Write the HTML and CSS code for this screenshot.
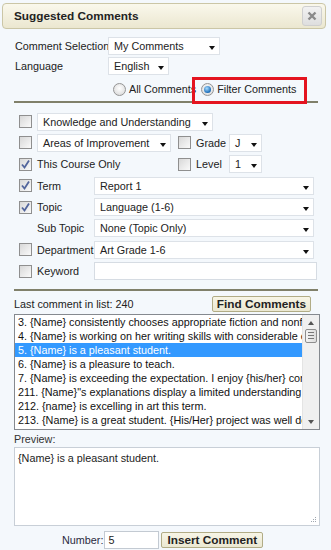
FILE: index.html
```html
<!DOCTYPE html>
<html lang="en">
<head>
  <meta charset="UTF-8" />
  <title>Suggested Comments</title>
  <link rel="stylesheet" href="styles.css">
</head>
<body>
  <div class="dialog">
    <div class="titlebar">
      <span class="title">Suggested Comments</span>
      <span class="close">
        <svg width="10" height="10" viewBox="0 0 10 10"><path d="M1.5 1.5 L8.5 8.5 M8.5 1.5 L1.5 8.5" stroke="#8a8a8a" stroke-width="2.4"/></svg>
      </span>
    </div>

    <div class="content">
      <div class="row">
        <span class="label">Comment Selection</span>
        <div class="select w-my">My Comments</div>
      </div>
      <div class="row">
        <span class="label">Language</span>
        <div class="select w-lang">English</div>
      </div>
      <div class="radio-row">
        <span class="radio"></span><span class="radio-text">All Comments</span>
        <span class="radio-pick">
          <span class="radio on"></span><span class="radio-text">Filter Comments</span>
          <span class="mark"></span>
        </span>
      </div>

      <div class="rule"></div>

      <div class="filters">
        <div class="frow">
          <span class="cb"></span>
          <div class="select w-know">Knowledge and Understanding</div>
        </div>
        <div class="frow">
          <span class="cb"></span>
          <div class="main"><div class="select w-area">Areas of Improvement</div></div>
          <span class="cb"></span>
          <span class="sublabel">Grade</span>
          <div class="select w-small">J</div>
        </div>
        <div class="frow">
          <span class="cb checked"><svg width="11" height="11" viewBox="0 0 11 11"><path d="M2 5.5 L4.5 8.5 L9 1.5" fill="none" stroke="#52659c" stroke-width="1.8"/></svg></span>
          <div class="main">This Course Only</div>
          <span class="cb"></span>
          <span class="sublabel">Level</span>
          <div class="select w-small">1</div>
        </div>
        <div class="frow">
          <span class="cb checked"><svg width="11" height="11" viewBox="0 0 11 11"><path d="M2 5.5 L4.5 8.5 L9 1.5" fill="none" stroke="#52659c" stroke-width="1.8"/></svg></span>
          <span class="flabel">Term</span>
          <div class="select w-wide">Report 1</div>
        </div>
        <div class="frow">
          <span class="cb checked"><svg width="11" height="11" viewBox="0 0 11 11"><path d="M2 5.5 L4.5 8.5 L9 1.5" fill="none" stroke="#52659c" stroke-width="1.8"/></svg></span>
          <span class="flabel">Topic</span>
          <div class="select w-wide">Language (1-6)</div>
        </div>
        <div class="frow">
          <span class="cb blank"></span>
          <span class="flabel">Sub Topic</span>
          <div class="select w-wide">None (Topic Only)</div>
        </div>
        <div class="frow">
          <span class="cb"></span>
          <span class="flabel">Department</span>
          <div class="select w-wide">Art Grade 1-6</div>
        </div>
        <div class="frow">
          <span class="cb"></span>
          <span class="flabel">Keyword</span>
          <div class="textbox w-key"></div>
        </div>
      </div>

      <div class="rule rule-2"></div>

      <div class="find-row">
        <span>Last comment in list: 240</span>
        <span class="btn">Find Comments</span>
      </div>

      <div class="listbox">
        <div class="items">
          <div class="item">3. {Name} consistently chooses appropriate fiction and nonfiction texts.</div>
          <div class="item">4. {Name} is working on her writing skills with considerable effort.</div>
          <div class="item selected">5. {Name} is a pleasant student.</div>
          <div class="item">6. {Name} is a pleasure to teach.</div>
          <div class="item">7. {Name} is exceeding the expectation. I enjoy {his/her} company.</div>
          <div class="item">211. {Name}"s explanations display a limited understanding of the topic.</div>
          <div class="item">212. {name} is excelling in art this term.</div>
          <div class="item">213. {Name} is a great student. {His/Her} project was well done.</div>
        </div>
        <div class="scrollbar">
          <span class="arrow up"></span>
          <span class="thumb"><i></i><i></i><i></i></span>
          <span class="track"></span>
          <span class="arrow down"></span>
        </div>
      </div>

      <div class="preview-label">Preview:</div>
      <div class="preview">
        {Name} is a pleasant student.
        <svg class="grip" width="7" height="7" viewBox="0 0 7 7"><path d="M5 1h1v1H5zM3 3h1v1H3zM5 3h1v1H5zM1 5h1v1H1zM3 5h1v1H3zM5 5h1v1H5z" fill="#a0a8b0"/></svg>
      </div>

      <div class="insert-row">
        <span class="num-label">Number:</span>
        <div class="textbox w-num">5</div>
        <span class="btn btn-insert">Insert Comment</span>
      </div>
    </div>
  </div>
</body>
</html>
```

FILE: styles.css
```css
body {
  margin: 0;
  background: #f4f8fc;
  font-family: "Liberation Sans", Arial, sans-serif;
  font-size: 10.8px;
  color: #222;
}

.dialog {
  padding: 3px 5px 0 2px;
}

.titlebar {
  height: 26px;
  box-sizing: border-box;
  border: 1px solid #cbc6a6;
  border-radius: 4px;
  background: linear-gradient(#faf8ec, #ebe7d0);
  display: flex;
  align-items: center;
  justify-content: space-between;
  padding: 0 3px 0 11px;
}

.title {
  font-size: 11.8px;
  font-weight: bold;
  color: #222;
}

.close {
  width: 20px;
  height: 20px;
  box-sizing: border-box;
  border: 1px solid #cfcfcf;
  border-radius: 3px;
  background: linear-gradient(#f2f2f2, #dedede);
  display: flex;
  align-items: center;
  justify-content: center;
}

.content {
  padding: 8px 0 0 12px;
}

.row {
  display: flex;
  align-items: center;
  height: 18px;
  margin-bottom: 2px;
}

.label {
  width: 93px;
  padding-left: 1px;
  white-space: nowrap;
}

/* fake select boxes */
.select {
  position: relative;
  height: 18px;
  box-sizing: border-box;
  border: 1px solid #dde2e8;
  background: #fff;
  padding: 0 18px 0 5px;
  line-height: 16px;
  white-space: nowrap;
}

.select::after {
  content: '';
  position: absolute;
  right: 4px;
  top: 8px;
  border-left: 3.5px solid transparent;
  border-right: 3.5px solid transparent;
  border-top: 4px solid #111;
}

.w-my { width: 112px; }
.w-lang { width: 61px; }
.w-know { width: 176px; }
.w-area { width: 134px; }
.w-small { width: 33px; }
.w-wide { width: 220px; }

.textbox {
  height: 18px;
  box-sizing: border-box;
  border: 1px solid #d6dce3;
  background: #fff;
  padding: 0 3px;
  line-height: 16px;
}

.w-key { width: 223px; }
.w-num { width: 55px; border-color: #c3cad2; }

/* radios */
.radio-row {
  display: flex;
  align-items: center;
  height: 16px;
  margin: 6px 0 0 99px;
}

.radio {
  width: 13px;
  height: 13px;
  box-sizing: border-box;
  border-radius: 50%;
  border: 1px solid #949494;
  background: radial-gradient(circle at 50% 40%, #ffffff, #d4d4d4);
  margin-right: 3px;
  position: relative;
}

.radio.on::after {
  content: '';
  position: absolute;
  left: 2px;
  top: 2px;
  width: 7px;
  height: 7px;
  border-radius: 50%;
  background: radial-gradient(circle at 40% 35%, #a8dcff, #1a6cb8 70%, #0d4a8a);
}

.radio-pick {
  position: relative;
  display: flex;
  align-items: center;
  margin-left: 5px;
}

/* red highlight box drawn over the option */
.mark {
  position: absolute;
  left: -9px;
  top: -6px;
  width: 115px;
  height: 27px;
  box-sizing: border-box;
  border: 3px solid #e4141f;
}

.rule {
  width: 304px;
  height: 2px;
  background: #80806a;
  margin-top: 4px;
}

.rule-2 {
  margin-top: 8px;
}

/* filter block */
.filters {
  padding: 9px 0 0 5px;
  display: flex;
  flex-direction: column;
  gap: 2.4px;
}

.frow {
  display: flex;
  align-items: center;
  height: 19px;
  white-space: nowrap;
}

.cb {
  width: 13px;
  height: 13px;
  box-sizing: border-box;
  border: 1px solid #8f8f8f;
  background: linear-gradient(135deg, #d8d8d8, #fafafa);
  margin-right: 5px;
  display: flex;
  align-items: center;
  justify-content: center;
  flex: none;
}

.cb.blank {
  visibility: hidden;
}

.main {
  width: 141px;
}

.sublabel {
  width: 33px;
}

.flabel {
  width: 57px;
}

/* list area */
.find-row {
  display: flex;
  align-items: center;
  justify-content: space-between;
  width: 297px;
  margin-top: 5px;
  height: 16px;
}

.btn {
  height: 16px;
  box-sizing: border-box;
  border: 1px solid #b1ac86;
  border-radius: 2px;
  background: linear-gradient(#f7f5e6, #ebe8d2);
  font-weight: bold;
  font-size: 11.8px;
  line-height: 14px;
  padding: 0 4px;
  color: #222;
}

.listbox {
  margin-top: 2px;
  width: 306px;
  height: 116px;
  box-sizing: border-box;
  border: 1px solid #85898f;
  background: #fff;
  display: flex;
}

.items {
  flex: 1;
  overflow: hidden;
}

.item {
  height: 14px;
  line-height: 14px;
  padding-left: 3px;
  white-space: nowrap;
  color: #111;
}

.item.selected {
  background: #3399ff;
  color: #fff;
}

.scrollbar {
  width: 16px;
  background: #f0f0f0;
  border-left: 1px solid #e4e4e4;
  display: flex;
  flex-direction: column;
  align-items: center;
}

.arrow {
  width: 0;
  height: 0;
  border-left: 3.5px solid transparent;
  border-right: 3.5px solid transparent;
  margin: 6px 0 4px;
}

.arrow.up { border-bottom: 4px solid #555; }
.arrow.down { border-top: 4px solid #555; margin: 4px 0 5px; }

.thumb {
  width: 12px;
  height: 14px;
  box-sizing: border-box;
  border: 1px solid #8e8e8e;
  border-radius: 2px;
  background: linear-gradient(90deg, #f4f4f4, #dcdcdc);
  display: flex;
  flex-direction: column;
  justify-content: center;
  align-items: center;
  gap: 2px;
}

.thumb i {
  display: block;
  width: 6px;
  height: 1px;
  background: #777;
}

.track {
  flex: 1;
}

.preview-label {
  height: 14px;
  line-height: 14px;
  margin-top: 2px;
  color: #333;
}

.preview {
  position: relative;
  margin-top: 1px;
  width: 306px;
  height: 79px;
  box-sizing: border-box;
  border: 1px solid #c8cfd7;
  background: #fff;
  padding: 3px;
  line-height: 14px;
}

.grip {
  position: absolute;
  right: 2px;
  bottom: 2px;
}

.insert-row {
  display: flex;
  align-items: center;
  margin: 5px 0 0 48px;
  height: 18px;
}

.num-label {
  color: #2a2a40;
  margin-right: 1px;
}

.btn-insert {
  margin-left: 2px;
  padding: 0 5px;
}
```
